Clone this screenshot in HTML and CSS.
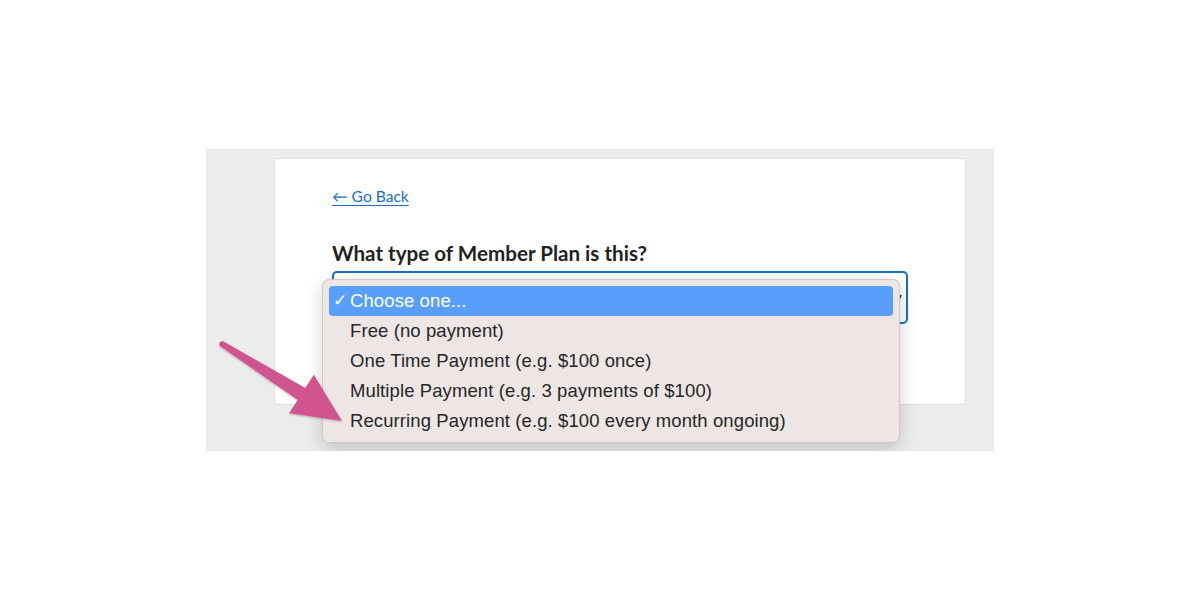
FILE: index.html
```html
<!DOCTYPE html>
<html lang="en">
<head>
  <meta charset="UTF-8">
  <title>Member Plan type</title>
  <link rel="stylesheet" href="styles.css">
</head>
<body>

<div class="shot">
  <div class="card">
    <a class="back-link" href="#">&larr; Go Back</a>

    <div class="field">
      <label class="field__label">What type of Member Plan is this?</label>
      <div class="select">
        <span class="select__caret"></span>

        <ul class="menu">
          <li class="menu__item menu__item--active"><span class="menu__check">&#10003;</span>Choose one...</li>
          <li class="menu__item">Free (no payment)</li>
          <li class="menu__item">One Time Payment (e.g. $100 once)</li>
          <li class="menu__item">Multiple Payment (e.g. 3 payments of $100)</li>
          <li class="menu__item">Recurring Payment (e.g. $100 every month ongoing)</li>
        </ul>
      </div>
    </div>
  </div>

  <!-- annotation arrow drawn over the screenshot -->
  <svg class="arrow" width="140" height="100" viewBox="210 330 140 100">
    <defs>
      <filter id="arrowShadow" x="-20%" y="-20%" width="140%" height="140%">
        <feDropShadow dx="0" dy="1" stdDeviation="1" flood-color="#000" flood-opacity="0.25"/>
      </filter>
    </defs>
    <path filter="url(#arrowShadow)" fill="#d0548f"
      d="M223.6,341.5 L305.3,388.1 L313.9,374.7 L342,421 L289.1,413.3 L297.7,399.9 L220.4,346.5 A3,3 0 0 1 223.6,341.5 Z"/>
  </svg>
</div>

</body>
</html>
```

FILE: styles.css
```css
body, html {
  margin: 0;
  background: #fff;
}

body {
  display: flex;
  justify-content: center;
  padding-top: 149px;
  font-family: Lato, "Liberation Sans", sans-serif;
}

.shot {
  position: relative;
  width: 788px;
  height: 302px;
  background: #ececed;
  padding: 9px 28px 0 68px;
  box-sizing: border-box;
}

.card {
  height: 247px;
  background: #fff;
  border: 1px solid #dedede;
  border-radius: 4px;
  box-sizing: border-box;
  padding: 27px 57px 0 57px;
}

.back-link {
  display: inline-block;
  font-size: 15.6px;
  color: #1a6ec3;
  text-decoration: underline;
  text-underline-offset: 3px;
  text-decoration-thickness: 1px;
}

.field {
  margin-top: 36px;
}

.field__label {
  display: block;
  font-size: 20.6px;
  font-weight: 700;
  color: #222;
  margin-bottom: 6px;
}

.select {
  position: relative;
  height: 53px;
  width: 576px;
  border: 2px solid #1570c6;
  border-radius: 5px;
  box-sizing: border-box;
}

.select__caret {
  position: absolute;
  right: 5px;
  top: 22px;
  width: 2px;
  height: 4px;
  background: #333;
  transform: skewX(-20deg);
}

.menu {
  position: absolute;
  left: -12px;
  top: 6px;
  width: 578px;
  margin: 0;
  padding: 6px 6px;
  list-style: none;
  box-sizing: border-box;
  background: #ede6e5;
  border: 1px solid #cfc9c8;
  border-radius: 7px;
  box-shadow: 0 6px 18px rgba(0, 0, 0, 0.18);
  font-family: "Liberation Sans", Arial, sans-serif;
  font-size: 18.5px;
  letter-spacing: 0.1px;
  color: #262626;
}

.menu__item {
  height: 30px;
  line-height: 30px;
  padding-left: 21px;
  border-radius: 4px;
  white-space: nowrap;
}

.menu__item--active {
  position: relative;
  background: #579ffb;
  color: #fff;
}

.menu__check {
  position: absolute;
  left: 4px;
  font-size: 17px;
}

.arrow {
  position: absolute;
  left: 4px;
  top: 181px;
  overflow: visible;
}
```
